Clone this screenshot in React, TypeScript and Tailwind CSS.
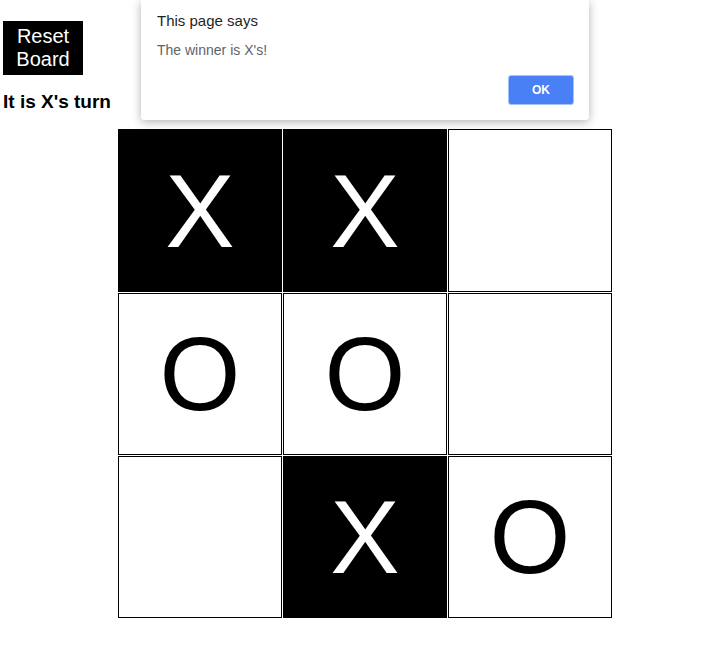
import React from "react";

const cells: { v: string; dark: boolean }[] = [
  { v: "X", dark: true },
  { v: "X", dark: true },
  { v: "", dark: false },
  { v: "O", dark: false },
  { v: "O", dark: false },
  { v: "", dark: false },
  { v: "", dark: false },
  { v: "X", dark: true },
  { v: "O", dark: false },
];

export default function App() {
  return (
    <div
      className="relative w-[708px] h-[648px] bg-white overflow-hidden"
      style={{ fontFamily: '"Liberation Sans", Arial, Helvetica, sans-serif' }}
    >
      <div className="pt-[21px]">
        <button className="ml-[3px] w-[80px] h-[54px] bg-black text-white text-[20px] leading-[23px] px-[6px] py-[4px] text-center block">
          Reset Board
        </button>
        <div className="ml-[3px] mt-[16px] text-[19px] leading-[21px] font-bold text-black">
          It is X's turn
        </div>
        <div className="ml-[118px] mt-[17px] grid grid-cols-[164px_164px_164px] grid-rows-[163px_162px_162px] gap-px w-[494px]">
          {cells.map((c, i) => (
            <div
              key={i}
              className={
                c.dark
                  ? "border border-black bg-black text-white flex items-center justify-center text-[104px]"
                  : "border border-black bg-white text-black flex items-center justify-center text-[104px]"
              }
            >
              {c.v}
            </div>
          ))}
        </div>
      </div>

      <div className="absolute left-[141px] top-0 w-[448px] h-[120px] bg-white rounded-b-[3px] shadow-[0_2px_10px_rgba(0,0,0,0.3)] flex flex-col px-[16px] pt-[12px]">
        <div className="text-[15px] leading-[18px] text-[#1f1f1f]">This page says</div>
        <div className="mt-[12px] text-[14px] leading-[16px] text-[#5f6368]">The winner is X's!</div>
        <div className="flex justify-end mt-[17px]">
          <button className="w-[66px] h-[30px] rounded-[3px] bg-[#4a80f5] border border-[#a3c1fa] text-white text-[12px] font-bold mr-[-1px]">
            OK
          </button>
        </div>
      </div>
    </div>
  );
}
